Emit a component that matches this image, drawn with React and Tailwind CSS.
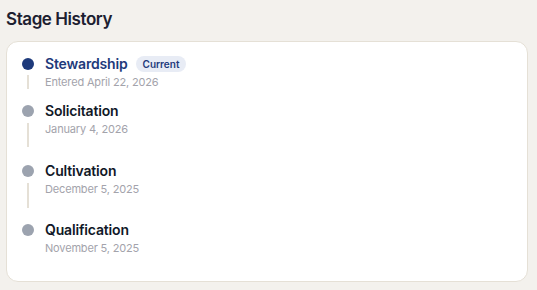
const stages = [
  {
    name: "Stewardship",
    date: "Entered April 22, 2026",
    current: true,
    rowH: "h-[47px]",
    lineH: "h-[14px] mt-[5px]",
  },
  {
    name: "Solicitation",
    date: "January 4, 2026",
    rowH: "h-[60px]",
    lineH: "h-[24px] mt-[6px]",
  },
  {
    name: "Cultivation",
    date: "December 5, 2025",
    rowH: "h-[59px]",
    lineH: "h-[25px] mt-[6px]",
  },
  {
    name: "Qualification",
    date: "November 5, 2025",
    rowH: "",
    lineH: null,
  },
];

const StageRow = ({ stage }) => {
  return (
    <div className={`flex items-start ${stage.rowH}`}>
      <div className="flex w-3 flex-col items-center pt-1">
        <div
          className={`h-3 w-3 rounded-full ${
            stage.current ? "bg-[#1e3a7b]" : "bg-[#9ca3af]"
          }`}
        />
        {stage.lineH && (
          <div className={`w-0.5 bg-[#e5e0d6] ${stage.lineH}`} />
        )}
      </div>
      <div className="ml-[11px] flex flex-col">
        <div className="flex items-center">
          <span
            className={`text-[14px] leading-5 font-semibold tracking-[-0.012em] ${
              stage.current ? "text-[#1e3a7b]" : "text-[#111827]"
            }`}
          >
            {stage.name}
          </span>
          {stage.current && (
            <span className="ml-2 flex h-4 items-center rounded-full bg-[#e8ecf5] px-[7px] text-[10px] font-semibold text-[#1e3a7b]">
              Current
            </span>
          )}
        </div>
        <span className="text-[11px] leading-4 tracking-[-0.015em] text-[#a3a3ab]">
          {stage.date}
        </span>
      </div>
    </div>
  );
};

export default function App() {
  return (
    <div
      className="min-h-[290px] w-[537px] bg-[#f3f1ed] px-[6px] pt-[7px]"
      style={{ fontFamily: "Inter, 'Noto Sans', sans-serif" }}
    >
      <h2 className="text-[17px] leading-6 font-semibold tracking-tight text-[#1c2030]">
        Stage History
      </h2>
      <div className="mt-[10px] h-[241px] w-[522px] rounded-xl border border-[#e5e0d6] bg-white pt-[12px] pl-[15px]">
        {stages.map((s) => (
          <StageRow key={s.name} stage={s} />
        ))}
      </div>
    </div>
  );
}
